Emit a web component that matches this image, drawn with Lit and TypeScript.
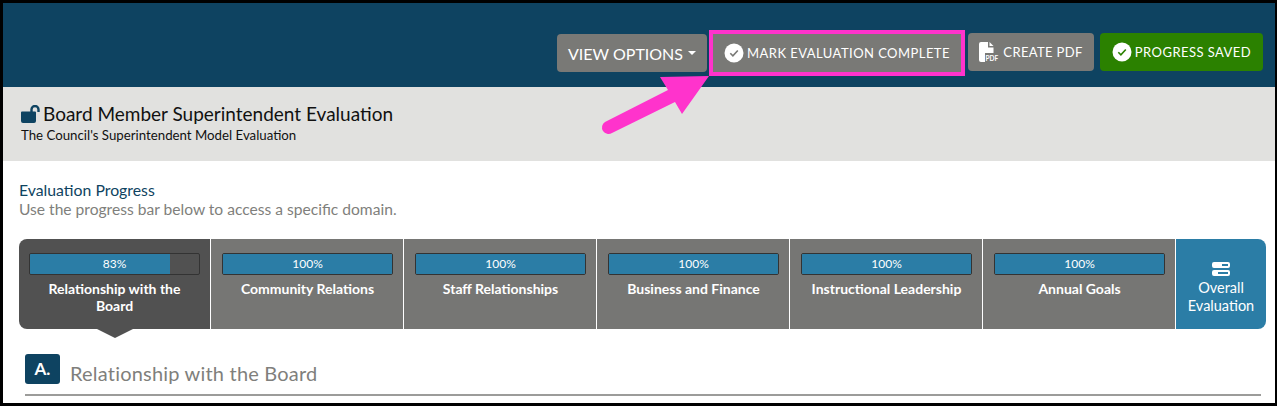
import { LitElement, html, css } from "lit";
import { customElement } from "lit/decorators.js";

const domains = [
  { name: "Relationship with the Board", pct: 83, active: true },
  { name: "Community Relations", pct: 100 },
  { name: "Staff Relationships", pct: 100 },
  { name: "Business and Finance", pct: 100 },
  { name: "Instructional Leadership", pct: 100 },
  { name: "Annual Goals", pct: 100 },
];

const check = (color: string) => html`
  <svg class="check" viewBox="0 0 20 20" width="20" height="20">
    <circle cx="10" cy="10" r="9.5" fill="#fff" />
    <path d="M6.3 10.3l2.6 2.6 4.9-5.4" fill="none" stroke=${color} stroke-width="1.6" />
  </svg>
`;

@customElement("app-root")
export class AppRoot extends LitElement {
  static styles = css`
    :host {
      display: block;
      position: relative;
      box-sizing: border-box;
      height: 406px;
      border: solid #000;
      border-width: 3px 2px 3px 3px;
      overflow: hidden;
      background: #fff;
      font-family: Lato, "Open Sans", sans-serif;
    }

    .top {
      height: 84px;
      box-sizing: border-box;
      background: #0e4361;
      display: flex;
      justify-content: flex-end;
      align-items: flex-start;
      padding: 30px 12px 0 0;
    }

    .btn {
      display: flex;
      align-items: center;
      justify-content: center;
      box-sizing: border-box;
      height: 38px;
      margin-right: 6px;
      border-radius: 4px;
      background: #797976;
      color: #fff;
      font-size: 13px;
      letter-spacing: 0.45px;
      white-space: nowrap;
    }

    .btn:last-child {
      margin-right: 0;
    }

    .check {
      margin-right: 3px;
      flex: none;
    }

    .view {
      width: 150px;
      margin: 1px 6px 0 0;
      font-size: 16px;
      letter-spacing: 0;
    }

    .caret {
      width: 0;
      height: 0;
      margin-left: 5px;
      border: solid transparent;
      border-width: 4px 4px 0;
      border-top-color: #fff;
    }

    .mark {
      width: 248px;
      margin: 1px 7px 0 0;
      border-radius: 0;
      outline: 4px solid #ff33cc;
    }

    .pdf {
      width: 126px;
      letter-spacing: 0.35px;
    }

    .pdf svg {
      margin-right: 4px;
    }

    .pdf text {
      font-size: 6.5px;
      font-weight: 700;
      letter-spacing: 0;
      fill: #fff;
    }

    .saved {
      width: 163px;
      background: #2b8100;
    }

    .band {
      height: 74px;
      box-sizing: border-box;
      background: #e1e1df;
      padding: 15px 0 0 18px;
      color: #111;
    }

    .title {
      display: flex;
      align-items: center;
      font-size: 19px;
      line-height: 24px;
    }

    .title svg {
      margin-right: 2px;
    }

    .subtitle {
      font-size: 13.25px;
      line-height: 17px;
      margin-top: 1px;
    }

    .main {
      padding: 19px 8px 0 16px;
    }

    .heading {
      font-size: 15.8px;
      line-height: 19px;
      color: #0e4361;
    }

    .hint {
      font-size: 15.6px;
      line-height: 21px;
      color: #7f7f7c;
    }

    .tabs {
      display: flex;
      height: 90px;
      margin-top: 19px;
      color: #fff;
    }

    .tab {
      position: relative;
      width: 192px;
      flex: none;
      box-sizing: border-box;
      padding: 14px 10px 0 11px;
      margin-right: 1px;
      background: #767674;
      text-align: center;
      font-size: 14px;
      font-weight: 700;
      line-height: 17px;
    }

    .tab.active {
      width: 191px;
      padding-left: 10px;
      background: #515151;
      border-radius: 8px 0 0 8px;
    }

    .tab.active::after {
      content: "";
      position: absolute;
      left: 50%;
      top: 100%;
      margin-left: -18px;
      border: solid transparent;
      border-width: 9px 18px 0;
      border-top-color: #515151;
    }

    .bar {
      height: 22px;
      box-sizing: border-box;
      margin-bottom: 5px;
      border: 1px solid #333;
      border-radius: 2px;
      overflow: hidden;
      display: grid;
      font-size: 12px;
      font-weight: 400;
      line-height: 20px;
    }

    .bar > * {
      grid-area: 1 / 1;
    }

    .fill {
      background: #2b7da6;
    }

    .overall {
      width: 90px;
      flex: none;
      box-sizing: border-box;
      padding-top: 23px;
      background: #2b7da6;
      border-radius: 0 8px 8px 0;
      text-align: center;
      font-size: 14.5px;
      line-height: 18px;
    }

    .overall svg {
      display: block;
      margin: 0 auto 3px;
    }

    .section {
      display: flex;
      align-items: flex-end;
      height: 30px;
      margin: 25px 6px 0 6px;
      padding-bottom: 10px;
      border-bottom: 2px solid #9c9c9a;
    }

    .letter {
      width: 35px;
      height: 30px;
      border-radius: 3px;
      background: #0e4361;
      color: #fff;
      font-size: 17px;
      font-weight: 700;
      line-height: 30px;
      text-align: center;
    }

    .section-name {
      margin: 0 0 -2px 10px;
      font-size: 20px;
      line-height: 26px;
      letter-spacing: 0.2px;
      color: #7f7f7c;
    }

    .arrow {
      position: absolute;
      left: 0;
      top: 0;
      pointer-events: none;
    }
  `;

  render() {
    return html`
      <div class="top">
        <div class="btn view">VIEW OPTIONS<span class="caret"></span></div>
        <div class="btn mark">${check("#797976")}MARK EVALUATION COMPLETE</div>
        <div class="btn pdf">
          <svg viewBox="0 0 20 20" width="20" height="20">
            <path d="M2 0h7v5.500h5.500V11H6v9H2a2 2 0 0 1-2-2V2a2 2 0 0 1 2-2z" fill="#fff" />
            <path d="M10.500 0l4 4h-4z" fill="#fff" />
            <text x="6.500" y="18.500">PDF</text>
          </svg>
          CREATE PDF
        </div>
        <div class="btn saved">${check("#2b8100")}PROGRESS SAVED</div>
      </div>

      <div class="band">
        <div class="title">
          <svg viewBox="0 0 20 18" width="20" height="18">
            <path d="M1 6.500h13a1 1 0 0 1 1 1V16a2 2 0 0 1-2 2H2a2 2 0 0 1-2-2V7.500a1 1 0 0 1 1-1z" fill="#0e4361" />
            <path d="M10.500 7V4.500a3.500 3.500 0 0 1 7 0V7" fill="none" stroke="#0e4361" stroke-width="2.400" />
          </svg>
          Board Member Superintendent Evaluation
        </div>
        <div class="subtitle">The Council's Superintendent Model Evaluation</div>
      </div>

      <div class="main">
        <div class="heading">Evaluation Progress</div>
        <div class="hint">Use the progress bar below to access a specific domain.</div>

        <div class="tabs">
          ${domains.map(
            (d) => html`
              <div class="tab ${d.active ? "active" : ""}">
                <div class="bar">
                  <div class="fill" style="width: ${d.pct}%"></div>
                  <span>${d.pct}%</span>
                </div>
                ${d.name}
              </div>
            `
          )}
          <div class="overall">
            <svg viewBox="0 0 18 14" width="18" height="14">
              <path fill-rule="evenodd" d="M2 0h14a2 2 0 0 1 2 2v2a2 2 0 0 1-2 2H2a2 2 0 0 1-2-2V2a2 2 0 0 1 2-2zM10 2v2h6V2zM2 8h14a2 2 0 0 1 2 2v2a2 2 0 0 1-2 2H2a2 2 0 0 1-2-2v-2a2 2 0 0 1 2-2zM6 10v2h10v-2z" fill="#fff" />
            </svg>
            Overall Evaluation
          </div>
        </div>

        <div class="section">
          <div class="letter">A.</div>
          <div class="section-name">Relationship with the Board</div>
        </div>
      </div>

      <svg class="arrow" width="1272" height="400" viewBox="3 3 1272 400">
        <path d="M660 77 L709 76 L682 114 L675 102 L612 133 A6.500 6.500 0 0 1 605 122 L668 90 Z" fill="#ff33cc" />
      </svg>
    `;
  }
}

declare global {
  interface HTMLElementTagNameMap {
    "app-root": AppRoot;
  }
}
